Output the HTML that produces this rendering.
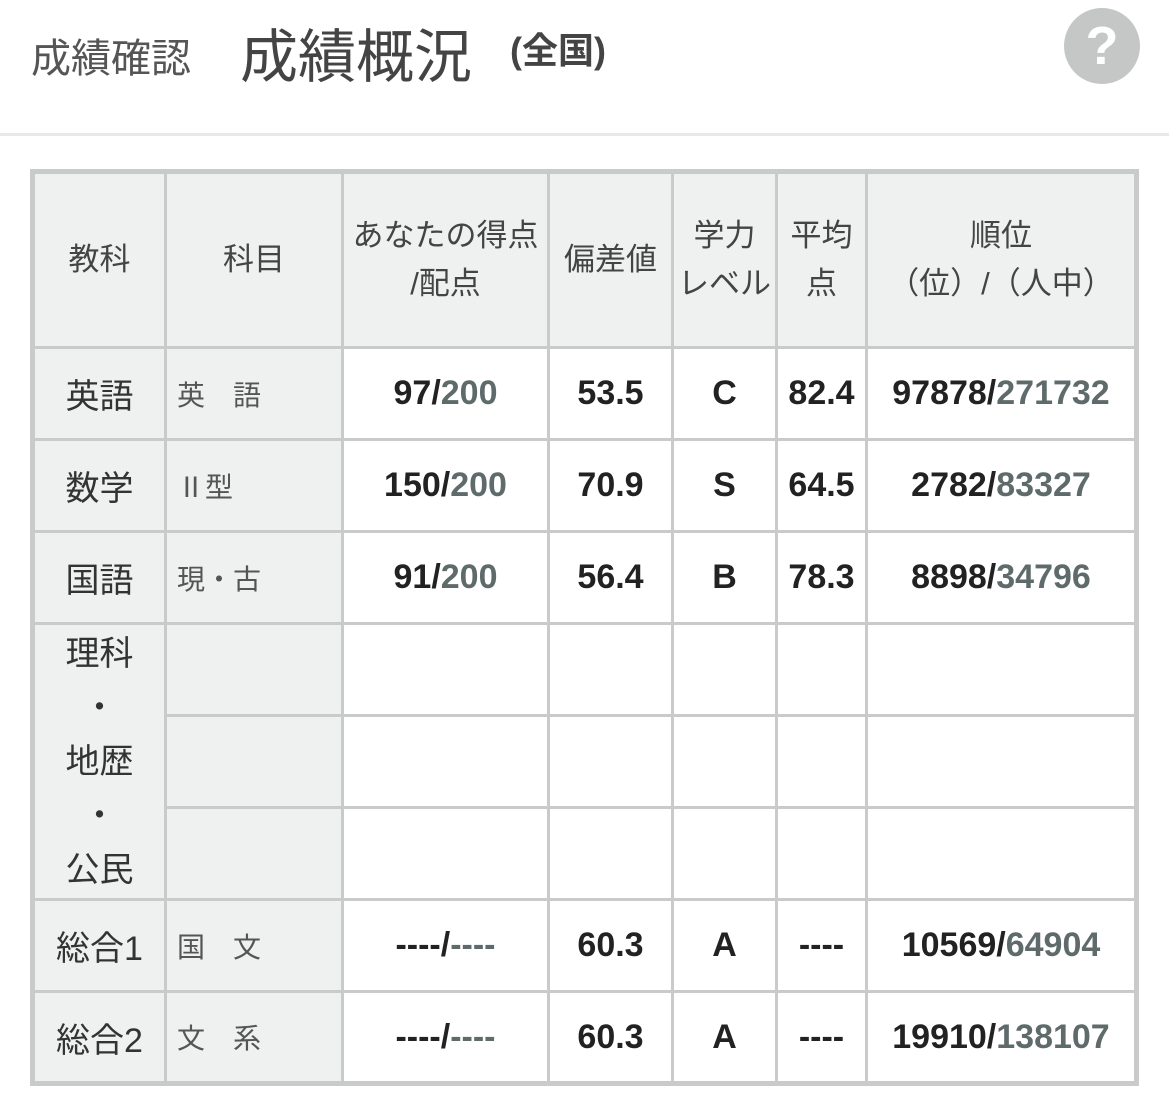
<!DOCTYPE html>
<html><head><meta charset="utf-8"><style>
body{margin:0;width:1169px;height:1104px;background:#fff;font-family:"Liberation Sans","Noto Sans CJK JP",sans-serif;color:#333;position:relative;overflow:hidden}
.t1{position:absolute;left:31px;top:26px;font-size:40px;color:#555}
.t2{position:absolute;left:240px;top:10px;font-size:58px;color:#444}
.t3{position:absolute;left:510px;top:22px;font-size:36px;color:#444;font-weight:bold}
.help{position:absolute;left:1064px;top:8px;width:76px;height:76px;border-radius:50%;background:#c5c6c6;color:#fff;font-size:54px;font-weight:bold;text-align:center;line-height:76px}
.hr{position:absolute;left:0;top:133px;width:1169px;height:3px;background:#e8eaea}
table{position:absolute;left:30px;top:169px;border-collapse:collapse;table-layout:fixed;border:5px solid #c9caca}
td{border:3px solid #c9caca;text-align:center;padding:0;font-size:34px;font-weight:bold;color:#222}
tr{height:92px}
.h td{height:172px;background:#eff0f0;font-weight:normal;font-size:31px;color:#444;line-height:48px}
.g{background:#eff0f0;font-weight:normal!important;color:#333!important}
.k{font-size:34px}
.s{text-align:left;padding-left:10px;font-size:28px;color:#555!important}
.n{color:#5f6b6b}
</style></head><body>
<div class="t1">成績確認</div><div class="t2">成績概況</div><div class="t3">(全国)</div>
<div class="help">?</div>
<div class="hr"></div>
<table>
<colgroup><col style="width:133px"><col style="width:177px"><col style="width:206px"><col style="width:124px"><col style="width:104px"><col style="width:90px"><col style="width:270px"></colgroup>
<tr class="h"><td>教科</td><td>科目</td><td>あなたの得点<br>/配点</td><td>偏差値</td><td>学力<br>レベル</td><td>平均<br>点</td><td>順位<br>（位）/（人中）</td></tr>
<tr><td class="g k">英語</td><td class="g s">英　語</td><td>97/<span class="n">200</span></td><td>53.5</td><td>C</td><td>82.4</td><td>97878/<span class="n">271732</span></td></tr>
<tr><td class="g k">数学</td><td class="g s">Ⅱ型</td><td>150/<span class="n">200</span></td><td>70.9</td><td>S</td><td>64.5</td><td>2782/<span class="n">83327</span></td></tr>
<tr><td class="g k">国語</td><td class="g s">現・古</td><td>91/<span class="n">200</span></td><td>56.4</td><td>B</td><td>78.3</td><td>8898/<span class="n">34796</span></td></tr>
<tr><td class="g k" rowspan="3" style="line-height:54px">理科<br>・<br>地歴<br>・<br>公民</td><td class="g"></td><td></td><td></td><td></td><td></td><td></td></tr>
<tr><td class="g"></td><td></td><td></td><td></td><td></td><td></td></tr>
<tr><td class="g"></td><td></td><td></td><td></td><td></td><td></td></tr>
<tr><td class="g k">総合1</td><td class="g s">国　文</td><td>----/<span class="n">----</span></td><td>60.3</td><td>A</td><td>----</td><td>10569/<span class="n">64904</span></td></tr>
<tr><td class="g k">総合2</td><td class="g s">文　系</td><td>----/<span class="n">----</span></td><td>60.3</td><td>A</td><td>----</td><td>19910/<span class="n">138107</span></td></tr>
</table>
</body></html>
